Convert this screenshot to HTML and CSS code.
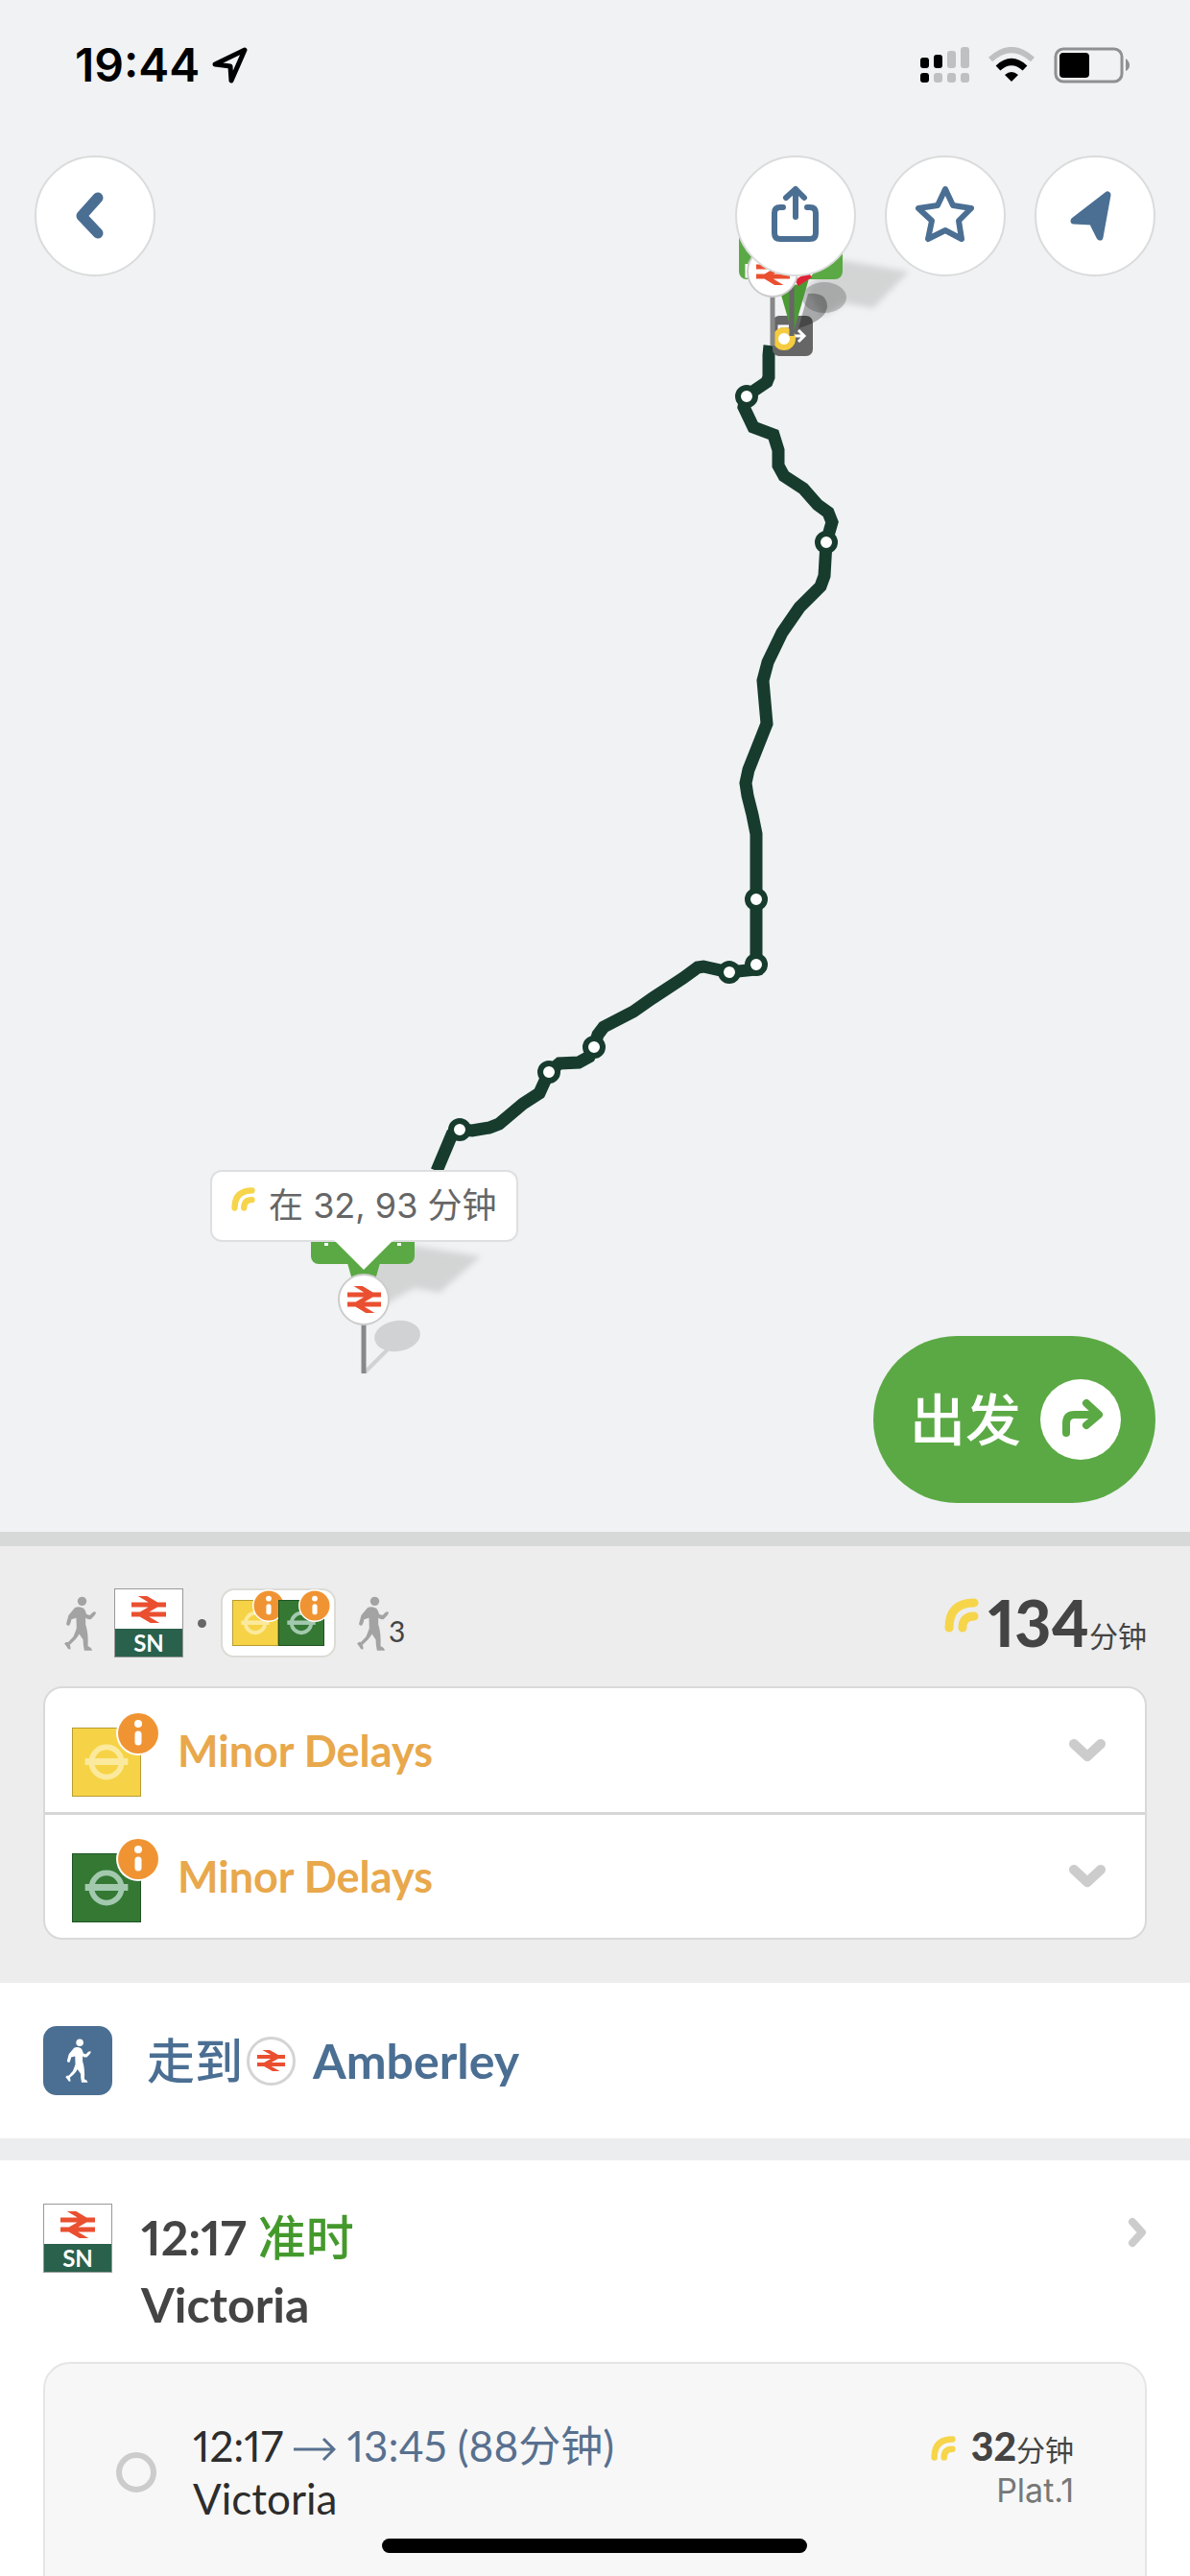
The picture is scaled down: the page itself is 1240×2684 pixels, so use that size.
FILE: index.html
```html
<!DOCTYPE html>
<html lang="zh-CN">
<head>
    <meta charset="UTF-8">
    <meta name="viewport" content="width=device-width, initial-scale=1">
    <title>Amberley - Victoria</title>
    <link rel="stylesheet" href="styles.css">
</head>
<body>
    <!-- shared icons -->
    <svg class="sprite" aria-hidden="true">
        <symbol id="rail" viewBox="0 0 62 39" preserveAspectRatio="none">
            <path d="M1,-8.9 46,12.4 16,26.6 61,47.9M0,12.4H62M62,26.6H0" fill="none" stroke="#ea4f30" stroke-width="7"/>
        </symbol>
        <symbol id="walk" viewBox="0 0 98 170">
            <circle cx="55" cy="16" r="14"/>
            <path d="M33 36Q46 30 60 38Q66 44 69 57L79 60L88 51Q97 46 98 52Q97 58 82 72Q76 74 66 68L66 88Q75 115 73 156Q85 160 86 169H62Q58 150 58 135L46 118Q40 132 17 151Q20 158 19 165Q12 168 8 158L0 148Q6 140 12 143L28 126Q34 112 38 100L37 68L22 72Q20 84 15 92Q6 92 6 86L13 60Z"/>
        </symbol>
        <symbol id="roundel" viewBox="0 0 72 72">
            <circle cx="36" cy="36" r="16" fill="none" stroke="currentColor" stroke-width="6"/>
            <path d="M13 32H59V39H13Z" fill="currentColor"/>
        </symbol>
        <symbol id="info" viewBox="0 0 46 46">
            <circle cx="23" cy="23" r="23" fill="#fff"/>
            <circle cx="23" cy="23" r="21" fill="#f09433"/>
            <circle cx="23" cy="13" r="4" fill="#fff"/>
            <path d="M23 24V32" stroke="#fff" stroke-width="7" stroke-linecap="round"/>
        </symbol>
        <symbol id="live" viewBox="0 0 36 36">
            <path d="M5 31Q5 5 31 5M19 31Q19 19 31 19" fill="none" stroke="#f6d54a" stroke-width="9" stroke-linecap="round"/>
        </symbol>
        <symbol id="down" viewBox="0 0 40 26">
            <path d="M6 6L20 19L34 6" fill="none" stroke="#ccc" stroke-width="10" stroke-linecap="round" stroke-linejoin="round"/>
        </symbol>
    </svg>

    <main class="app">
        <section class="map">
            <svg class="route" viewBox="0 0 1240 1596">
                <defs>
                    <filter id="soft"><feGaussianBlur stdDeviation="3"/></filter>
                </defs>
                <!-- line -->
                <path class="line" d="M802 360L801 370V393L799 398L777 413L775 424L785 445L806 453L811 469V485L817 496L837 509L852 526L863 534L867 544L861 565L859 600L855 611L833 633L815 659L800 690L795 709L799 754L780 802L777 816L779 829L784 849L788 869V1010L760 1013L733 1007L727 1008L712 1019L680 1040L660 1054L629 1070L623 1078L619 1091L614 1101L603 1107L583 1108L572 1117L562 1139L545 1150L520 1171L510 1175L492 1178L479 1177L471 1182L455 1220"/>
                <g class="stops">
                    <circle cx="778" cy="413" r="9"/>
                    <circle cx="861" cy="565" r="9"/>
                    <circle cx="788" cy="937" r="9"/>
                    <circle cx="788" cy="1005" r="9"/>
                    <circle cx="760" cy="1013" r="9"/>
                    <circle cx="619" cy="1091" r="9"/>
                    <circle cx="572" cy="1117" r="9"/>
                    <circle cx="479" cy="1177" r="9"/>
                </g>
                <!-- arrival pins -->
                <path d="M872 270L947 283L910 321L880 316L858 330L840 300Z" fill="#d3d5d5" filter="url(#soft)"/>
                <rect x="805" y="329" width="42" height="42" rx="7" fill="#666"/>
                <path d="M812 346V340H822M826 350H838M832 344L838 350L832 356" fill="none" stroke="#fff" stroke-width="3"/>
                <circle cx="817" cy="353" r="9" fill="#fff" stroke="#f5cc3f" stroke-width="6"/>
                <ellipse cx="859" cy="310" rx="23" ry="16" fill="#000" opacity=".2"/>
                <path d="M832 342L842 306Q862 304 862 320Q860 334 832 342Z" fill="#000" opacity=".3"/>
                <rect x="770" y="225" width="108" height="66" rx="8" fill="#5ba944"/>
                <path d="M809 290H843L826 349Z" fill="#4b9a35"/>
                <path d="M825 296V350" stroke="#666" stroke-width="5"/>
                <circle cx="825" cy="270" r="27" fill="#fff"/>
                <path d="M830 295L844 286" stroke="#dc2436" stroke-width="7"/>
                <path d="M778 275V288H782" fill="none" stroke="#fff" stroke-width="3"/>
                <path d="M805 308V360" stroke="#888" stroke-width="5"/>
                <circle cx="805" cy="283" r="26" fill="#fff" stroke="#ccc" stroke-width="2"/>
                <use href="#rail" x="788" y="269" width="35" height="28"/>
                <!-- departure pin -->
                <path d="M425 1297L501 1309L458 1347L432 1342L400 1360L385 1320Z" fill="#d3d5d5" filter="url(#soft)"/>
                <rect x="324" y="1250" width="108" height="67" rx="8" fill="#5ba944"/>
                <path d="M340 1295V1298M416 1295V1298" stroke="#fff" stroke-width="4"/>
                <path d="M362 1316H396L379 1376Z" fill="#5ba944"/>
                <path d="M380 1430L404 1406" stroke="#d0d2d3" stroke-width="4"/>
                <ellipse cx="414" cy="1392" rx="24" ry="16" fill="#d0d2d3" transform="rotate(-8 414 1392)"/>
                <path d="M379 1379V1431" stroke="#888" stroke-width="5"/>
                <circle cx="379" cy="1354" r="26" fill="#fff" stroke="#ccc" stroke-width="2"/>
                <use href="#rail" x="362" y="1340" width="35" height="28"/>
            </svg>

            <div class="callout">
                <svg class="callout-live"><use href="#live"/></svg>
                <span>在 32, 93 分钟</span>
            </div>

            <header class="top">
                <div class="status">
                    <span class="time">19:44</span>
                    <svg class="gps" width="38" height="40" viewBox="0 0 38 40" fill="none" stroke="#000" stroke-width="5" stroke-linejoin="round"><path d="M34 4L20 36L19 21L3 19Z"/></svg>
                    <div class="status-right">
                        <svg width="51" height="38" viewBox="0 0 51 38" fill="#bfc0c1">
                            <rect x="28" y="4" width="9" height="18" rx="3"/>
                            <rect x="42" y="0" width="9" height="22" rx="3"/>
                            <rect x="14" y="27" width="9" height="10" rx="3"/>
                            <rect x="28" y="27" width="9" height="10" rx="3"/>
                            <rect x="42" y="27" width="9" height="10" rx="3"/>
                            <g fill="#000">
                                <rect y="11" width="9" height="11" rx="3"/>
                                <rect x="14" y="8" width="9" height="14" rx="3"/>
                                <rect y="27" width="9" height="10" rx="3"/>
                            </g>
                        </svg>
                        <svg width="48" height="38" viewBox="0 0 48 38" fill="none">
                            <path d="M2 13Q24 -7 46 13" stroke="#bfc0c1" stroke-width="6"/>
                            <path d="M10 22Q24 9 38 22" stroke="#000" stroke-width="7"/>
                            <path d="M17 29Q24 23 31 29L24 36Z" fill="#000"/>
                        </svg>
                        <svg width="80" height="38" viewBox="0 0 80 38">
                            <rect x="2" y="2" width="69" height="34" rx="8" fill="none" stroke="#8f9091" stroke-width="3"/>
                            <rect x="6" y="6" width="31" height="26" rx="4"/>
                            <path d="M75 12Q79 15 79 19T75 25Z" fill="#8f9091"/>
                        </svg>
                    </div>
                </div>
                <nav class="toolbar">
                    <button class="round" aria-label="返回">
                        <svg viewBox="0 0 126 126"><path d="M66 44L49 63L66 81" stroke-width="11"/></svg>
                    </button>
                    <button class="round push" aria-label="分享">
                        <svg viewBox="0 0 126 126"><path d="M63 64V35M53 44L63 35L72 44M50 54H47Q41 54 41 60V81Q41 87 47 87H78Q84 87 84 81V60Q84 54 78 54H75" stroke-width="6"/></svg>
                    </button>
                    <button class="round" aria-label="收藏">
                        <svg viewBox="0 0 126 126"><path d="M63 35L71 52L90 55L77 68L80 87L63 78L45 87L49 68L35 55L55 52Z" stroke-width="6"/></svg>
                    </button>
                    <button class="round" aria-label="定位">
                        <svg viewBox="0 0 126 126"><path d="M76 41L68 85L60 69L41 68Z" fill="#4b6f93" stroke-width="7"/></svg>
                    </button>
                </nav>
            </header>

            <button class="go">
                出发
                <span class="go-icon">
                    <svg width="84" height="84" viewBox="0 0 84 84"><path d="M27 56V46Q27 37 36 37H60M48 25L61 37L48 48" fill="none" stroke="#5ba944" stroke-width="8" stroke-linecap="round" stroke-linejoin="round"/></svg>
                </span>
            </button>
        </section>

        <section class="summary">
            <div class="legs">
                <svg class="walker"><use href="#walk"/></svg>
                <span class="sn"><svg><use href="#rail"/></svg><b>SN</b></span>
                <i class="dot"></i>
                <span class="chip">
                    <span class="tube small yellow"><svg class="roundel"><use href="#roundel"/></svg><svg class="badge"><use href="#info"/></svg></span>
                    <span class="tube small green"><svg class="roundel"><use href="#roundel"/></svg><svg class="badge"><use href="#info"/></svg></span>
                </span>
                <svg class="walker"><use href="#walk"/></svg>
                <span class="mins">3</span>
                <div class="total">
                    <svg class="total-live"><use href="#live"/></svg>
                    <strong>134</strong><span class="unit">分钟</span>
                </div>
            </div>
            <div class="delays">
                <button class="delay">
                    <span class="tube yellow"><svg class="roundel"><use href="#roundel"/></svg><svg class="badge"><use href="#info"/></svg></span>
                    <span class="delay-text">Minor Delays</span>
                    <svg class="down"><use href="#down"/></svg>
                </button>
                <button class="delay">
                    <span class="tube green"><svg class="roundel"><use href="#roundel"/></svg><svg class="badge"><use href="#info"/></svg></span>
                    <span class="delay-text">Minor Delays</span>
                    <svg class="down"><use href="#down"/></svg>
                </button>
            </div>
        </section>

        <section class="walk">
            <span class="walk-icon"><svg><use href="#walk"/></svg></span>
            <span class="walk-to">走到</span>
            <span class="station"><svg><use href="#rail"/></svg></span>
            <span class="walk-name">Amberley</span>
        </section>

        <section class="train">
            <div class="train-head">
                <span class="sn"><svg><use href="#rail"/></svg><b>SN</b></span>
                <h2>12:17 <span class="ontime">准时</span><br>Victoria</h2>
                <svg class="next" width="20" height="32" viewBox="0 0 20 32"><path d="M5 5L15 16L5 27" fill="none" stroke="#ccc" stroke-width="8" stroke-linecap="round" stroke-linejoin="round"/></svg>
            </div>
            <label class="option">
                <input type="radio" name="departure">
                <span class="option-main">
                    <span>12:17 <span class="arrive"><svg width="44" height="26" viewBox="0 0 44 26"><path d="M0 13H41M31 2L42 13L31 24" fill="none" stroke="#58708f" stroke-width="3"/></svg> 13:45 (88分钟)</span></span>
                    <span>Victoria</span>
                </span>
                <span class="option-side">
                    <span class="wait"><svg class="wait-live"><use href="#live"/></svg><strong>32</strong><span class="unit">分钟</span></span>
                    <span class="plat">Plat.1</span>
                </span>
            </label>
        </section>
    </main>
    <div class="home"></div>
</body>
</html>
```
FILE: styles.css
```css
*{
    margin: 0;
    padding: 0;
    box-sizing: border-box;
}
body{
    background: #fff;
    color: #444;
    font-family: Lato, "Noto Sans CJK SC", sans-serif;
    font-variant-numeric: proportional-nums;
    overflow: hidden;
}
button{
    border: 0;
    background: none;
    font: inherit;
    color: inherit;
    cursor: pointer;
}
svg{
    display: block;
    flex: none;
}
.sprite{
    position: absolute;
    width: 0;
    height: 0;
}
.app{
    display: flex;
    flex-direction: column;
    height: 100vh;
    overflow: hidden;
}
.app > section{
    flex: none;
}

/* map */
.map{
    position: relative;
    background: #f0f2f4;
    border-bottom: 15px solid #d7d9d9;
}
.route{
    width: 100%;
    height: auto;
}
.line{
    fill: none;
    stroke: #173c2e;
    stroke-width: 13;
}
.stops circle{
    fill: #fff;
    stroke: #173c2e;
    stroke-width: 6;
}
.callout{
    position: absolute;
    left: 219px;
    top: 1219px;
    display: flex;
    gap: 14px;
    height: 75px;
    padding: 0 20px;
    border: 2px solid #dedfe0;
    border-radius: 12px;
    background: #fff;
    color: #666;
    font: 36px/71px Inter, "Noto Sans CJK SC", sans-serif;
    white-space: nowrap;
}
.callout:after{
    content: "";
    position: absolute;
    left: 50%;
    top: 100%;
    margin-left: -31px;
    border: 31px solid transparent;
    border-top-color: #fff;
    border-bottom: 0;
}
.callout-live{
    width: 25px;
    height: 25px;
    margin-top: 16px;
}
.top{
    position: absolute;
    top: 0;
    left: 0;
    right: 0;
}
.status{
    display: flex;
    align-items: center;
    height: 136px;
    padding: 0 62px 0 78px;
    color: #000;
    font: 600 48px/58px Inter, sans-serif;
}
.gps{
    margin-left: 13px;
}
.status-right{
    display: flex;
    gap: 20px;
    margin-left: auto;
}
.toolbar{
    display: flex;
    gap: 30px;
    padding: 26px 36px;
}
.round{
    width: 126px;
    height: 126px;
    border: 2px solid #dadbdc;
    border-radius: 50%;
    background: #fff;
}
.round svg{
    margin: -2px;
    width: 126px;
    height: 126px;
    fill: none;
    stroke: #4b6f93;
    stroke-linecap: round;
    stroke-linejoin: round;
}
.push{
    margin-left: auto;
}
.go{
    position: absolute;
    right: 36px;
    bottom: 30px;
    display: flex;
    align-items: center;
    gap: 20px;
    height: 174px;
    padding: 0 36px 0 38px;
    border-radius: 87px;
    background: #5ba944;
    color: #fff;
    font-size: 58px;
    font-weight: 500;
    line-height: 84px;
}
.go-icon{
    border-radius: 50%;
    background: #fff;
}

/* summary */
.summary{
    padding: 44px 45px 45px;
    background: #ededed;
}
.legs{
    display: flex;
    align-items: center;
    height: 72px;
    margin-bottom: 30px;
    padding-left: 22px;
}
.walker{
    width: 33px;
    height: 57px;
    fill: #a3a3a3;
}
.sn{
    display: flex;
    flex-direction: column;
    flex: none;
    align-items: center;
    justify-content: space-between;
    width: 72px;
    height: 72px;
    padding-top: 7px;
    border: 1px solid #999;
    background: #fff;
}
.sn svg{
    width: 36px;
    height: 28px;
}
.sn b{
    align-self: stretch;
    background: #2a614c;
    color: #fff;
    font-size: 24px;
    line-height: 29px;
    text-align: center;
}
.legs .sn{
    margin-left: 19px;
}
.dot{
    width: 9px;
    height: 9px;
    margin: 0 15px;
    border-radius: 50%;
    background: #666;
}
.chip{
    display: flex;
    padding: 10px;
    margin-right: 22px;
    border: 2px solid #dddbd6;
    border-radius: 14px;
    background: #fff;
}
.tube{
    position: relative;
    flex: none;
    width: 72px;
    height: 72px;
    border: 1px solid #b89c32;
    background: #f6d346;
    color: #fbea9d;
}
.tube.green{
    border-color: #1f5424;
    background: #347833;
    color: #a2c9ae;
}
.roundel{
    width: 100%;
    height: 100%;
}
.badge{
    position: absolute;
    top: -18px;
    right: -21px;
    width: 46px;
    height: 46px;
}
.small{
    width: 48px;
    height: 48px;
}
.small .badge{
    top: -12px;
    right: -8px;
    width: 34px;
    height: 34px;
}
.mins{
    align-self: flex-end;
    padding-bottom: 11px;
    font-size: 30px;
    line-height: 34px;
}
.total{
    display: flex;
    align-items: baseline;
    margin-left: auto;
    padding-top: 12px;
    line-height: 72px;
}
.total-live{
    align-self: flex-start;
    width: 36px;
    height: 36px;
    margin: 10px 10px 0 0;
}
.total strong{
    font-size: 66px;
    font-weight: 900;
}
.unit{
    font-size: 30px;
    font-weight: 400;
}
.delays{
    border: 2px solid #d9d9d9;
    border-radius: 20px;
    background: #fff;
}
.delay{
    display: flex;
    align-items: center;
    width: 100%;
    height: 129px;
    padding: 0 40px 0 28px;
}
.delay + .delay{
    height: 131px;
    border-top: 3px solid #d6d6d6;
}
.delay .tube{
    margin: 24px 38px 0 0;
}
.delay-text{
    color: #e8a84b;
    font-size: 45px;
    font-weight: 700;
}
.down{
    width: 40px;
    height: 26px;
    margin-left: auto;
}

/* steps */
.walk{
    display: flex;
    align-items: center;
    padding: 45px;
    border-bottom: 23px solid #ecedef;
    color: #4b6f93;
    font-size: 50px;
    font-weight: 700;
    line-height: 72px;
}
.walk-icon{
    display: flex;
    align-items: center;
    justify-content: center;
    width: 72px;
    height: 72px;
    margin-right: 36px;
    border-radius: 14px;
    background: #4b6f93;
}
.walk-icon svg{
    width: 27px;
    height: 46px;
    fill: #fff;
}
.walk-to{
    font-weight: 500;
}
.station{
    display: flex;
    align-items: center;
    justify-content: center;
    width: 51px;
    height: 51px;
    margin: 0 18px 0 4px;
    border: 3px solid #d4d4d4;
    border-radius: 50%;
}
.station svg{
    width: 29px;
    height: 22px;
}
.app > .train{
    flex: 1;
    padding: 45px 45px 0;
}
.train-head{
    display: flex;
}
.train h2{
    margin: 0 0 25px 30px;
    font-size: 50px;
    line-height: 70px;
}
.ontime{
    color: #44992c;
    font-weight: 500;
    line-height: 50px;
}
.next{
    margin: 14px 0 0 auto;
}
.option{
    display: flex;
    height: 400px;
    padding: 58px 74px;
    border: 2px solid #e5e5e5;
    border-radius: 28px;
    background: #f7f7f7;
    line-height: 55px;
}
.option input{
    appearance: none;
    width: 42px;
    height: 42px;
    margin: 34px 38px 0 0;
    border: 6px solid #ccc;
    border-radius: 50%;
}
.option-main, .option-side{
    display: flex;
    flex-direction: column;
}
.option-main{
    color: #2d2d2d;
    font-size: 44px;
}
.arrive{
    color: #58708f;
}
.arrive svg{
    display: inline;
}
.option-side{
    align-items: flex-end;
    margin-left: auto;
}
.wait{
    display: flex;
    align-items: baseline;
}
.wait-live{
    width: 26px;
    height: 26px;
    margin-right: 16px;
}
.wait strong{
    font-size: 41px;
    font-weight: 900;
}
.plat{
    color: #777;
    font-family: Inter, sans-serif;
    font-size: 34px;
    line-height: 30px;
}
.home{
    position: fixed;
    left: 50%;
    bottom: 24px;
    width: 443px;
    height: 15px;
    margin-left: -222px;
    border-radius: 8px;
    background: #000;
}
```
